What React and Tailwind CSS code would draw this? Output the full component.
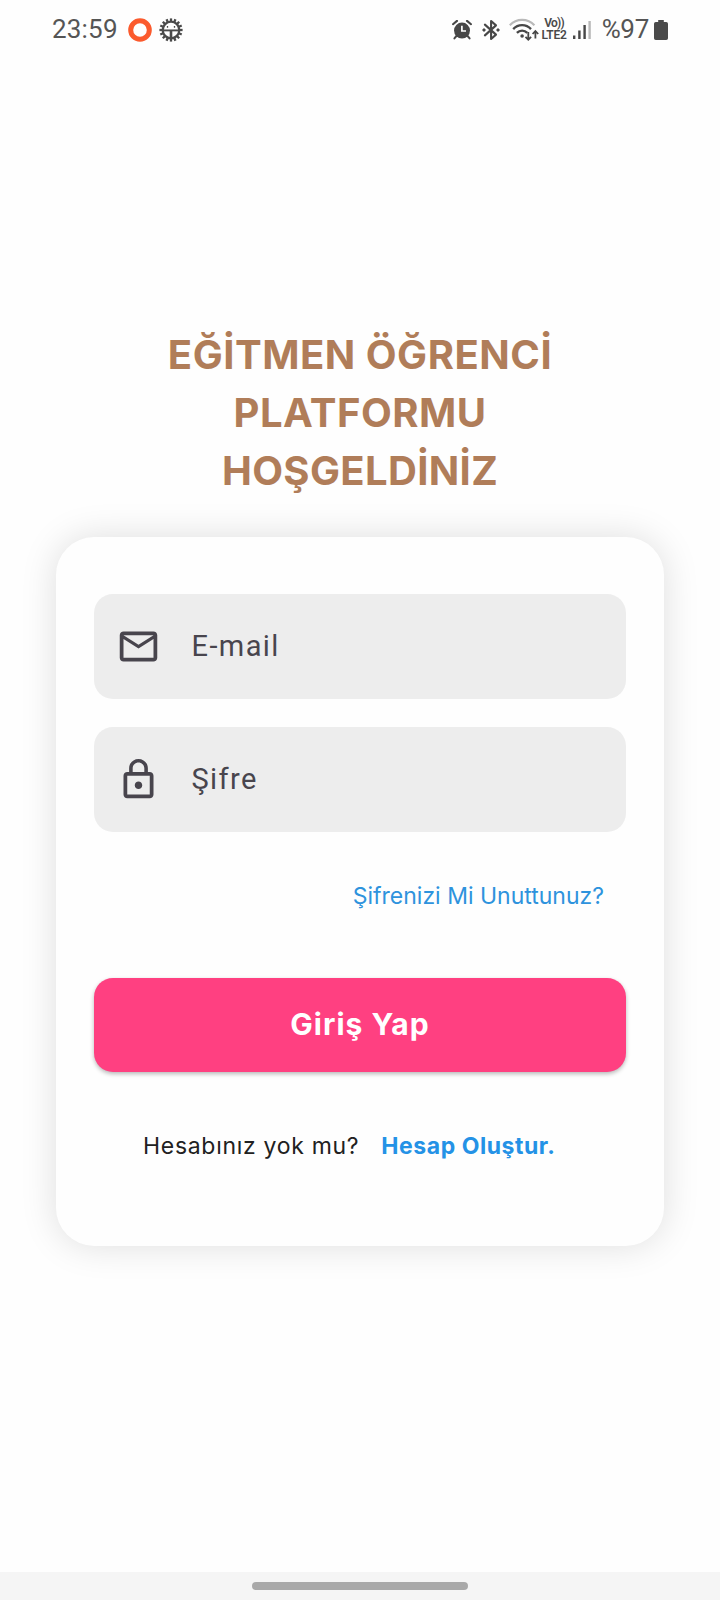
import React from 'react';

const GEAR_TEETH = [0, 22.5, 45, 67.5, 90, 112.5, 135, 157.5, 180, 202.5, 225, 247.5, 270, 292.5, 315, 337.5];

function RingIcon() {
  return (
    <svg className="ml-[10px] h-6 w-6 shrink-0" viewBox="0 0 24 24" fill="none">
      <circle cx="12" cy="12" r="9.3" stroke="#fb5a2d" strokeWidth="5" />
    </svg>
  );
}

function GearIcon() {
  return (
    <svg className="ml-[7px] h-6 w-6 shrink-0" viewBox="0 0 24 24" fill="none" stroke="#4a4a4a">
      {GEAR_TEETH.map((a) => (
        <path key={a} d="M12 0.4V3.4" strokeWidth="2.3" transform={`rotate(${a} 12 12)`} />
      ))}
      <circle cx="12" cy="12" r="8.3" strokeWidth="2.3" />
      <path d="M4 12.4H20" strokeWidth="1.9" />
      <path d="M12 12.4V20" strokeWidth="2.6" />
      <path d="M8.5 8.1V9.7M15.5 8.1V9.7" strokeWidth="1.3" />
    </svg>
  );
}

function AlarmIcon() {
  return (
    <svg className="h-5 w-5 shrink-0" viewBox="0 0 20 20" fill="none">
      <circle cx="10" cy="10.6" r="8" fill="#474747" />
      <path d="M1 4.2L5 0.9M19 4.2L15 0.9" stroke="#474747" strokeWidth="2.1" strokeLinecap="round" />
      <path d="M4.4 16L2.4 18.4M15.6 16L17.6 18.4" stroke="#474747" strokeWidth="2" strokeLinecap="round" />
      <path d="M9.9 5.8V11H14" stroke="#fff" strokeWidth="1.7" />
    </svg>
  );
}

function BluetoothIcon() {
  return (
    <svg className="ml-[10px] h-[22px] w-[18px] shrink-0" viewBox="0 0 18 22" fill="none" stroke="#474747" strokeWidth="2.1">
      <path d="M2.9 5.6L14 15.6L9.1 20V2L14 6.4L2.9 16.4" strokeLinejoin="round" strokeLinecap="round" />
      <path d="M0 11L2 9L4 11L2 13ZM14 11L16 9L18 11L16 13Z" fill="#474747" stroke="none" />
    </svg>
  );
}

function WifiIcon() {
  return (
    <svg className="ml-[9px] h-6 w-[30px] shrink-0" viewBox="0 0 30 24" fill="none">
      <path d="M0.8 7.2C7.5 0.2 18.7 0.2 25.4 7.2" stroke="#b9b9b9" strokeWidth="2.2" />
      <path d="M4.2 11.1C9 5.9 17.2 5.9 22 11.1" stroke="#474747" strokeWidth="2.3" />
      <path d="M7.9 14.9C10.8 11.8 15.4 11.8 18.3 14.9" stroke="#474747" strokeWidth="2.3" />
      <circle cx="13.1" cy="18" r="1.8" fill="#474747" />
      <path d="M19.3 14V21.5M16.5 18.8L19.3 21.8L22.1 18.8" stroke="#474747" strokeWidth="1.8" />
      <path d="M26.4 20.6V13.4M23.6 16L26.4 13L29.2 16" stroke="#474747" strokeWidth="1.8" />
    </svg>
  );
}

function SignalIcon() {
  return (
    <svg className="ml-[6px] h-5 w-[18px] shrink-0" viewBox="0 0 18 20">
      <rect x="0" y="15.5" width="2.4" height="3.5" fill="#474747" />
      <rect x="5.2" y="10.5" width="2.4" height="8.5" fill="#474747" />
      <rect x="10.4" y="5" width="2.4" height="14" fill="#474747" />
      <rect x="15.4" y="1" width="2.4" height="18" fill="#b9b9b9" />
    </svg>
  );
}

function BatteryIcon() {
  return (
    <svg className="ml-[5px] h-5 w-[14px] shrink-0" viewBox="0 0 14 20" fill="#4a4a4a">
      <path d="M4.2 0H9.8V2H12.2A1.8 1.8 0 0 1 14 3.8V18.2A1.8 1.8 0 0 1 12.2 20H1.8A1.8 1.8 0 0 1 0 18.2V3.8A1.8 1.8 0 0 1 1.8 2H4.2Z" />
    </svg>
  );
}

function MailIcon() {
  return (
    <svg className="h-[45px] w-[45px] shrink-0" viewBox="0 0 24 24" fill="#48454d">
      <path d="M22 6c0-1.1-.9-2-2-2H4c-1.1 0-2 .9-2 2v12c0 1.1.9 2 2 2h16c1.1 0 2-.9 2-2V6zm-2 0l-8 5-8-5h16zm0 12H4V8l8 5 8-5v10z" />
    </svg>
  );
}

function LockIcon() {
  return (
    <svg className="h-[45px] w-[45px] shrink-0" viewBox="0 0 24 24" fill="#48454d">
      <path d="M12 17c1.1 0 2-.9 2-2s-.9-2-2-2-2 .9-2 2 .9 2 2 2zm6-9h-1V6c0-2.76-2.24-5-5-5S7 3.24 7 6v2H6c-1.1 0-2 .9-2 2v10c0 1.1.9 2 2 2h12c1.1 0 2-.9 2-2V10c0-1.1-.9-2-2-2zM8.9 6c0-1.71 1.39-3.1 3.1-3.1s3.1 1.39 3.1 3.1v2H8.9V6zM18 20H6V10h12v10z" />
    </svg>
  );
}

function StatusBar() {
  return (
    <header className="flex h-[59px] items-center pl-[52px] pr-[52px] font-['Roboto',sans-serif] text-[26px] leading-[59px] text-[#555]">
      <span className="tracking-[0.2px]">23:59</span>
      <RingIcon />
      <GearIcon />
      <div className="ml-auto flex items-center">
        <AlarmIcon />
        <BluetoothIcon />
        <WifiIcon />
        <div className="ml-[2px] flex w-[26px] flex-col items-center text-[12px] font-semibold leading-[11.5px] text-[#4a4a4a]">
          <span className="tracking-[-0.7px]">Vo))</span>
          <span className="tracking-[-0.2px]">LTE2</span>
        </div>
        <SignalIcon />
        <span className="ml-[10.5px] tracking-[-0.3px]">%97</span>
        <BatteryIcon />
      </div>
    </header>
  );
}

function Field({ icon, label, spacing }) {
  return (
    <label className="flex h-[104.5px] items-center rounded-[19px] bg-[#ededed] pl-[22px]">
      {icon}
      <span className={`ml-[30.5px] font-['Roboto',sans-serif] text-[29px] leading-[40px] text-[#48454d] ${spacing}`}>
        {label}
      </span>
    </label>
  );
}

export default function App() {
  return (
    <div className="flex h-[1600px] w-[720px] flex-col bg-[#fefefe] font-['Inter',sans-serif]">
      <StatusBar />
      <main className="flex flex-1 flex-col px-14 pt-[267px]">
        <h1 className="text-center text-[40px] font-bold leading-[58px] text-[#b07d59]">
          <span className="block tracking-[0.52px]">EĞİTMEN ÖĞRENCİ</span>
          <span className="block tracking-[0.49px]">PLATFORMU</span>
          <span className="block tracking-[0.36px]">HOŞGELDİNİZ</span>
        </h1>
        <section className="mt-[37px] flex h-[709px] flex-col rounded-[38px] bg-[#fefefe] px-[38px] pt-[57px] shadow-[0_0_36px_rgba(0,0,0,0.13)]">
          <div className="flex flex-col gap-[28.5px]">
            <Field icon={<MailIcon />} label="E-mail" spacing="tracking-[1.4px]" />
            <Field icon={<LockIcon />} label="Şifre" spacing="tracking-[1.4px]" />
          </div>
          <a className="mr-[22px] mt-[48px] self-end text-[23px] font-normal leading-8 text-[#2e93dd]">
            Şifrenizi Mi Unuttunuz?
          </a>
          <button className="mt-[66px] h-[94px] w-full rounded-[19px] bg-[#ff4081] text-[30px] font-bold tracking-[1px] text-white shadow-[0_2px_4px_rgba(0,0,0,0.28)]">
            Giriş Yap
          </button>
          <p className="mt-[58px] flex items-center pl-[49px] text-[23px] leading-8">
            <span className="font-normal tracking-[0.7px] text-[#212121]">Hesabınız yok mu?</span>
            <a className="ml-[22px] font-bold tracking-[0.55px] text-[#2492e6]">Hesap Oluştur.</a>
          </p>
        </section>
      </main>
      <footer className="flex h-7 shrink-0 justify-center bg-[#f5f5f5] pt-[10px]">
        <div className="h-2 w-[216px] rounded-full bg-[#a9a9a9]" />
      </footer>
    </div>
  );
}
